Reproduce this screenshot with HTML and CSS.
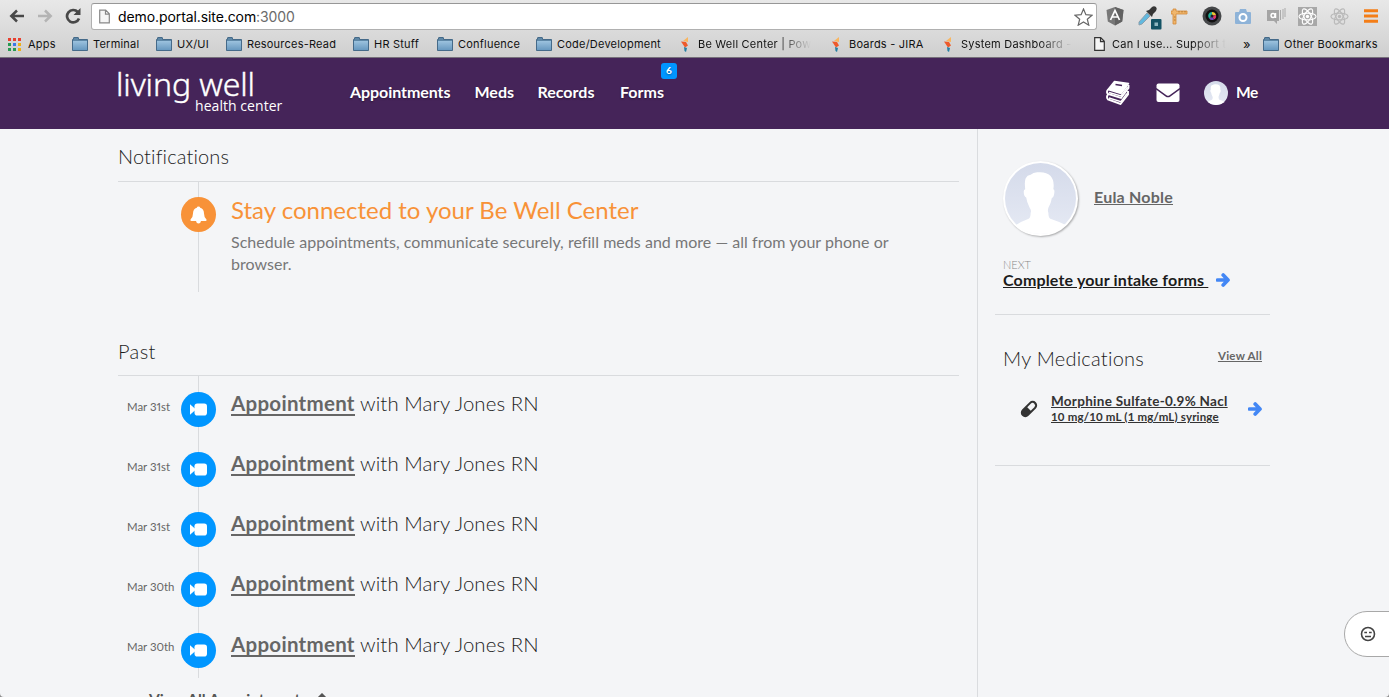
FILE: index.html
```html
<!DOCTYPE html>
<html lang="en">
<head>
<meta charset="utf-8">
<title>Living Well Health Center</title>
<link rel="stylesheet" href="styles.css">
</head>
<body>
<svg class="defs" width="0" height="0" aria-hidden="true">
  <defs>
    <linearGradient id="fold" x1="0" y1="0" x2="0" y2="1"><stop offset="0" stop-color="#9cc2de"/><stop offset="1" stop-color="#6899c0"/></linearGradient>
    <linearGradient id="avatar-bg" x1="0" y1="0" x2="0" y2="1"><stop offset="0" stop-color="#d4daea"/><stop offset="1" stop-color="#e6eaf4"/></linearGradient>
    <symbol id="folder" viewBox="0 0 16 14"><path d="M.5 13.5V2.5h1V1q0-.5.5-.5h4q.5 0 .5.5v1.500h9v11z" fill="#5e87a6" stroke="#456a89"/><path d="M1 4h14v9H1z" fill="url(#fold)"/></symbol>
    <symbol id="page" viewBox="0 0 11 14"><path d="M.7.7h6l3.600 3.600v9H.7zM6.500.7v4h4" fill="#f6f6f6" stroke="currentColor" stroke-width="1.200"/></symbol>
    <symbol id="spark" viewBox="0 0 8 15"><path d="M7 0v5L2 4z" fill="#f9b660"/><path d="M0 4.500 5 5l2 3.500-3 2z" fill="#ee5a2b"/><path d="m3 10 3 1-1 4-1.500-1z" fill="#2680a4"/></symbol>
    <symbol id="arrow" viewBox="0 0 14 14"><path d="M1.500 7h10M7.200 2 12 7l-4.800 5" fill="none" stroke="#4387f5" stroke-width="3.700" stroke-linecap="round" stroke-linejoin="round"/></symbol>
    <symbol id="person" viewBox="0 0 72 72"><circle cx="36" cy="36" r="36" fill="url(#avatar-bg)"/><path d="M11 63Q17 59 24 56.500q2-1 2-6 1-2-1-5-3-6-3.500-10.500-2.500-1-2.500-6 0-2 1.500-2.500-1-8 .5-11 1.500-3 5-3.500 3-3 8-2.500 8-.5 12 3.500 4.500 5 3 13.500 1.500 0 1 4-.5 4.500-2.500 5-1 6-3.500 10-1 3 0 5 0 5 2 6 9 3 16 6.500Q50 72 36 72T11 63z" fill="#fff"/></symbol>
    <symbol id="camera" viewBox="0 0 17 13"><rect x="4.500" y=".5" width="12.500" height="12" rx="2.800" fill="#fff"/><path d="M0 1.300 6 6.500 0 11.700z" fill="#fff"/></symbol>
    <symbol id="atom" viewBox="0 0 20 20"><g fill="none" stroke="currentColor" stroke-width="1.200"><ellipse cx="10" cy="10" rx="9" ry="3.600"/><ellipse cx="10" cy="10" rx="9" ry="3.600" transform="rotate(60 10 10)"/><ellipse cx="10" cy="10" rx="9" ry="3.600" transform="rotate(120 10 10)"/></g><circle cx="10" cy="10" r="1.800" fill="currentColor"/></symbol>
  </defs>
</svg>
<div class="window">
  <div class="browser">
    <div class="toolbar">
      <svg class="nav-back" width="16" height="14" viewBox="0 0 16 14"><path d="M15 7H3M8 1.500 2.300 7 8 12.500" fill="none" stroke="#484848" stroke-width="2.500"/></svg>
      <svg class="nav-forward" width="16" height="14" viewBox="0 0 16 14"><path d="M1 7h12M8 1.500 13.700 7 8 12.500" fill="none" stroke="#b4b4b4" stroke-width="2.500"/></svg>
      <svg class="nav-reload" width="16" height="16" viewBox="0 0 16 16"><path d="M12.800 4A6.200 6.200 0 1 0 14 10.500" fill="none" stroke="#484848" stroke-width="2.700"/><path d="M15.500 0v7H8.500z" fill="#484848"/></svg>
      <div class="address">
        <svg class="address-page" width="11" height="15"><use href="#page"/></svg>
        <span class="url">demo.portal.site.com<span class="port">:3000</span></span>
        <svg class="star" width="19" height="18" viewBox="0 0 19 18"><path d="m9.500 1 2.400 5.700 6.100.5-4.700 4 1.500 6-5.300-3.300-5.300 3.300 1.500-6-4.700-4 6.100-.5z" fill="#fff" stroke="#666" stroke-width="1.200"/></svg>
      </div>
      <div class="extensions">
        <svg width="18" height="20" viewBox="0 0 18 20"><path d="m9 1 8.500 3-1.300 11.500L9 19.500l-7.200-4L.5 4z" fill="#777"/><path d="M9 1v18.500l7.200-4L17.500 4z" fill="#626262"/><path d="M4.500 14 9 4.500l4.500 9.500M6.500 11h5" fill="none" stroke="#fff" stroke-width="1.700"/></svg>
        <svg class="dropper" width="24" height="25" viewBox="0 0 24 25"><path d="m1 17 8-9 3 3-8 8-3 1z" fill="#62b9df" stroke="#8b9fac"/><path d="m8 6 3-1 3-3q2-1.500 4 0 1.500 1.500 0 4l-3 3-1 3z" fill="#363636"/><rect x="13" y="14" width="10.500" height="10.500" rx="1" fill="#145365"/><rect x="16.500" y="17.500" width="3.500" height="3.500" fill="#8fb7c1"/></svg>
        <svg width="17" height="17" viewBox="0 0 17 17"><path d="M0 3h2V1h3v2h11v3H5v10H2V6H0z" fill="#efb66d" stroke="#d38939" stroke-width=".8"/><path d="M8 3v1.500m3-1.500v1.500M14 3v1.500M3 9h1.500M3 12h1.500" stroke="#a66a23" stroke-width=".8"/></svg>
        <svg width="20" height="20" viewBox="0 0 20 20"><circle cx="10" cy="10" r="9.500" fill="#454749"/><circle cx="10" cy="10" r="6.500" fill="#111"/><path d="M10 10V6a4 4 0 0 1 4 3z" fill="#e9c533"/><path d="m10 10 4-1a4 4 0 0 1-2 4.500z" fill="#e3376b"/><path d="m10 10 2 3.500a4 4 0 0 1-5-1z" fill="#6c4bbc"/><path d="m10 10-3 2.500A4 4 0 0 1 10 6z" fill="#20b29a"/><circle cx="10" cy="10" r="1.500" fill="#222"/></svg>
        <svg width="18" height="17" viewBox="0 0 18 17"><path d="M2 4h3l1-3h6l1 3h3q1 0 1 1v10q0 1-1 1H2q-1 0-1-1V5q0-1 1-1z" fill="#8eb3d8"/><circle cx="9" cy="9.500" r="3.500" fill="#8eb3d8" stroke="#fff" stroke-width="2"/></svg>
        <svg width="20" height="17" viewBox="0 0 20 17"><path d="M1 2h12v11h-2v3l-3-3H1z" fill="#a5a5a5"/><path d="M14.500 2v10M17 1v10M19 0v9" stroke="#aaa"/><circle cx="7" cy="7.500" r="2" fill="none" stroke="#fff" stroke-width="1.500"/><path d="M9.500 5v5" stroke="#fff" stroke-width="1.500"/></svg>
        <svg class="atom-box" width="19" height="19"><use href="#atom"/></svg>
        <svg class="atom-plain" width="19" height="19"><use href="#atom"/></svg>
        <svg width="14" height="14" viewBox="0 0 14 14"><path d="M0 1.700h14M0 7h14M0 12.300h14" stroke="#f47e17" stroke-width="3"/></svg>
      </div>
    </div>
    <div class="bookmarks">
      <span class="bookmark"><svg class="apps-icon" width="13" height="13" viewBox="0 0 13 13"><path d="M0 0h3v3H0zM5 0h3v3H5zM10 0h3v3h-3z" fill="#e8402f"/><path d="M0 5h3v3H0zM0 10h3v3H0zM5 10h3v3H5z" fill="#279a52"/><path d="M5 5h3v3H5z" fill="#3a78e8"/><path d="M10 5h3v3h-3zM10 10h3v3h-3z" fill="#eeaf16"/></svg><span class="t-apps">Apps</span></span>
      <span class="bookmark"><svg width="16" height="14"><use href="#folder"/></svg>Terminal</span>
      <span class="bookmark"><svg width="16" height="14"><use href="#folder"/></svg>UX/UI</span>
      <span class="bookmark"><svg width="16" height="14"><use href="#folder"/></svg>Resources-Read</span>
      <span class="bookmark"><svg width="16" height="14"><use href="#folder"/></svg>HR Stuff</span>
      <span class="bookmark"><svg width="16" height="14"><use href="#folder"/></svg>Confluence</span>
      <span class="bookmark"><svg width="16" height="14"><use href="#folder"/></svg>Code/Development</span>
      <span class="bookmark spark"><svg width="8" height="15"><use href="#spark"/></svg><span class="fade">Be Well Center | Pow</span></span>
      <span class="bookmark spark"><svg width="8" height="15"><use href="#spark"/></svg>Boards - JIRA</span>
      <span class="bookmark spark"><svg width="8" height="15"><use href="#spark"/></svg><span class="fade">System Dashboard -</span></span>
      <span class="bookmark doc"><svg width="11" height="14"><use href="#page"/></svg><span class="fade">Can I use... Support t</span></span>
      <span class="bookmark more">»</span>
      <span class="bookmark"><svg width="16" height="14"><use href="#folder"/></svg>Other Bookmarks</span>
    </div>
  </div>

  <header class="site-header">
    <div class="logo"><span class="logo-main">living well</span><span class="logo-sub">health center</span></div>
    <nav class="site-nav">
      <a class="n-app">Appointments</a><a class="n-meds">Meds</a><a class="n-rec">Records</a><a class="n-forms">Forms<span class="badge">6</span></a>
    </nav>
    <div class="user-tools">
      <svg class="books" width="24" height="25" viewBox="0 0 24 25"><path d="M8.500 1.500 22.500 3.500 15 13.500 2 9.500z" fill="#fff" stroke="#fff" stroke-width="1.500" stroke-linejoin="round"/><path d="m9.500 4.500 6.500 1" stroke="#452459" stroke-width="1.600"/><path d="M2 9.500Q0 12 2 14l13 4 7.500-10V5M2 14.500Q0 17 2 19.500L14.500 24l7.500-9.500V11" fill="none" stroke="#fff" stroke-width="1.900"/><path d="m3 12.500 12 3.500 6.500-9M3 18l12 3.700 6-8.200" fill="none" stroke="#fff" stroke-width="1.500"/></svg>
      <svg class="mail" width="24" height="20" viewBox="0 0 24 20"><rect x=".5" y=".5" width="23" height="18.500" rx="2" fill="#fff"/><path d="m0 5.500 10 7.300q2 1.400 4 0l10-7.300" fill="none" stroke="#452459" stroke-width="1.500"/></svg>
      <svg class="me-avatar" width="24" height="24"><use href="#person"/></svg>
      <span class="me">Me</span>
    </div>
  </header>

  <div class="content">
    <main class="feed">
      <h2 class="section-title first">Notifications</h2>
      <section class="timeline notice">
        <span class="dot dot-orange"><svg width="17" height="18" viewBox="0 0 17 18"><path d="M8.500.5q1.500 0 1.700 1.300Q14 3 14 7.500q0 4 2.500 6 .4 1.500-1 1.500h-14Q.1 15 .5 13.500 3 11.500 3 7.500 3 3 6.800 1.800 7 .5 8.500.5zM6 15h5Q10.500 17.500 8.500 17.500T6 15z" fill="#fff"/></svg></span>
        <div class="notice-copy">
          <h3 class="notice-title">Stay connected to your Be Well Center</h3>
          <p class="notice-text">Schedule appointments, communicate securely, refill meds and more — all from your phone or<br>browser.</p>
        </div>
      </section>
      <h2 class="section-title past">Past</h2>
      <section class="timeline visits">
        <div class="visit"><time>Mar 31st</time><span class="dot"><svg width="17" height="13"><use href="#camera"/></svg></span><p><a>Appointment</a><span class="with">with Mary Jones RN</span></p></div>
        <div class="visit"><time>Mar 31st</time><span class="dot"><svg width="17" height="13"><use href="#camera"/></svg></span><p><a>Appointment</a><span class="with">with Mary Jones RN</span></p></div>
        <div class="visit"><time>Mar 31st</time><span class="dot"><svg width="17" height="13"><use href="#camera"/></svg></span><p><a>Appointment</a><span class="with">with Mary Jones RN</span></p></div>
        <div class="visit"><time>Mar 30th</time><span class="dot"><svg width="17" height="13"><use href="#camera"/></svg></span><p><a>Appointment</a><span class="with">with Mary Jones RN</span></p></div>
        <div class="visit"><time>Mar 30th</time><span class="dot"><svg width="17" height="13"><use href="#camera"/></svg></span><p><a>Appointment</a><span class="with">with Mary Jones RN</span></p></div>
      </section>
      <div class="view-past">View All Appointments <svg width="12" height="12" viewBox="0 0 12 12"><path d="m1.500 6 4.500-4.500L10.500 6M6 2v10" fill="none" stroke="#555" stroke-width="2.200"/></svg></div>
    </main>
    <aside class="sidebar">
      <section class="profile">
        <div class="profile-row"><span class="avatar"><svg width="71" height="71" viewBox="0 0 72 72"><use href="#person" width="72" height="72"/></svg></span><a class="name">Eula Noble</a></div>
        <div class="next">NEXT</div>
        <div class="intake"><a>Complete your intake forms&nbsp;</a><svg width="14" height="14"><use href="#arrow"/></svg></div>
      </section>
      <section class="meds">
        <div class="meds-head"><h2>My Medications</h2><a>View All</a></div>
        <div class="med">
          <svg class="pill" width="18" height="18" viewBox="0 0 18 18"><g transform="rotate(-45 9 9)"><rect x="-.7" y="4.500" width="19.400" height="9" rx="4.500" fill="#333"/><path d="M9 6.500h5a2.500 2.500 0 0 1 0 5H9z" fill="#f4f5f7"/></g></svg>
          <div class="med-copy"><a class="med-name">Morphine Sulfate-0.9% Nacl</a><a class="med-dose">10 mg/10 mL (1 mg/mL) syringe</a></div>
          <svg width="14" height="14"><use href="#arrow"/></svg>
        </div>
      </section>
    </aside>
  </div>
  <div class="feedback"><svg width="16" height="16" viewBox="0 0 16 16"><circle cx="8" cy="8" r="6.500" fill="none" stroke="#444" stroke-width="1.600"/><path d="M4.300 6.500h2.700M9 6.500h2.700M5 10.500h6" stroke="#444" stroke-width="1.600"/></svg></div>
</div>
</body>
</html>
```
FILE: styles.css
```css
* { box-sizing: border-box; }
body { margin: 0; background: #8d8d8d; overflow: hidden; font-family: Lato, "Open Sans", sans-serif; color: #1c1c1c; }
h2, h3, p { margin: 0; font-weight: 300; }
svg { display: block; flex: none; }
.defs { position: absolute; }
.window { position: relative; width: 1389px; height: 697px; overflow: hidden; background: #f4f5f7; border-radius: 0 0 4px 4px; }

/* browser bars */
.browser { height: 58px; background: linear-gradient(#e8e8e8, #cfcfcf); border-bottom: 1px solid #76707a; font-family: Inter, sans-serif; color: #111; }
.toolbar { height: 32px; display: flex; align-items: center; padding-left: 9px; }
.nav-forward { margin-left: 12px; }
.nav-reload { margin-left: 12px; }
.address { width: 1006px; height: 27px; margin: 1px 0 0 10px; padding: 0 3px 0 7px; display: flex; align-items: center; background: #fff; border: 1px solid #b0b0b0; border-top-color: #979797; border-radius: 3px; }
.address-page { color: #888; }
.url { margin-left: 8px; font-size: 14px; letter-spacing: -.09px; color: #000; flex: 1; }
.port { color: #6b6b6b; }
.extensions { display: grid; grid-template-columns: 32px 33px 31px 32px 32px 32px 32px 34px 14px; align-items: center; padding-left: 9px; }
.dropper { margin-top: 3px; }
.atom-box { background: #a8a8a8; color: #fff; }
.atom-plain { color: #b9b9b9; }
.bookmarks { display: grid; grid-template-columns: 64px 84px 70px 127px 84px 99px 142px 151px 112px 152px 149px 21px 126px; padding-left: 8px; height: 24px; align-items: center; }
.bookmark { display: flex; align-items: center; gap: 5px; font-size: 11px; letter-spacing: .22px; white-space: nowrap; }
.t-apps { margin-left: 2px; }
.spark { padding-left: 3px; gap: 9px; }
.doc { padding-left: 1px; gap: 7px; color: #333; }
.fade { background: linear-gradient(90deg, #111 70%, rgba(17,17,17,0)); -webkit-background-clip: text; background-clip: text; color: transparent; }
.more { font-size: 13px; padding-left: 1px; }

/* site header */
.site-header { height: 71px; background: #452459; color: #fff; display: flex; padding-left: 117px; }
.logo { width: 233px; padding-top: 6px; display: flex; flex-direction: column; font-family: "Noto Sans", "Open Sans", sans-serif; }
.logo-main { margin-left: -1px; font-size: 32px; line-height: 40px; font-weight: 300; letter-spacing: -.1px; height: 34px; -webkit-text-stroke: .4px #fff; }
.logo-sub { margin-left: 78px; font-family: "Open Sans", sans-serif; font-size: 14px; line-height: 16px; letter-spacing: .05px; }
.site-nav { display: flex; width: 756px; padding-top: 24px; font-size: 16px; font-weight: 700; line-height: 20px; text-shadow: 0 1px 2px rgba(0,0,0,.4); }
.n-app { width: 124.500px; letter-spacing: -.07px; }
.n-meds { width: 63px; }
.n-rec { width: 82.500px; }
.n-forms { position: relative; }
.badge { position: absolute; left: 41px; top: -19px; width: 16px; height: 16px; background: #0096ff; border-radius: 3px; font-size: 10px; line-height: 15px; text-align: center; }
.user-tools { display: flex; align-items: center; height: 69px; }
.mail { margin-left: 26px; }
.me-avatar { margin-left: 24px; }
.me { margin: -2px 0 0 8px; font-size: 15.500px; font-weight: 700; letter-spacing: -.3px; text-shadow: 0 1px 2px rgba(0,0,0,.4); }

/* activity feed */
.content { display: flex; height: 568px; }
.feed { width: 978px; flex: none; padding: 0 18px 0 118px; border-right: 1px solid #dadcdf; }
.section-title { border-bottom: 1px solid #d9dbde; font-size: 20px; line-height: 24px; letter-spacing: .14px; }
.first { height: 53px; padding-top: 15px; }
.past { height: 84px; padding-top: 47px; letter-spacing: .4px; }
.timeline { background: linear-gradient(#d9dbde, #d9dbde) 80px 0 / 1px 100% no-repeat; }
.notice { height: 110px; padding: 15px 0 0 63px; display: flex; }
.dot { width: 35px; height: 35px; border-radius: 50%; background: #0096ff; display: flex; align-items: center; justify-content: center; flex: none; }
.dot-orange { background: #f89238; }
.notice-copy { margin: -1px 0 0 15px; white-space: nowrap; }
.notice-title { font-size: 24px; line-height: 28px; font-weight: 400; color: #f89238; }
.notice-text { margin-top: 7px; font-size: 16px; line-height: 22px; font-weight: 400; letter-spacing: .035px; color: #777; }
.visits { height: 302px; padding-top: 16px; }
.visit { height: 60.150px; display: grid; grid-template-columns: 63px 35px 1fr; align-items: start; }
.visit time { padding: 6.500px 0 0 9px; font-size: 11.400px; line-height: 16px; color: #666; white-space: nowrap; font-variant-numeric: proportional-nums; }
.visit p { margin: -1px 0 0 15px; display: flex; gap: 5px; font-size: 20.400px; line-height: 24px; letter-spacing: .1px; }
.visit a { width: 124px; font-size: 20.500px; font-weight: 700; letter-spacing: .28px; color: #666; border-bottom: 2px solid #666; line-height: 22px; height: 24px; margin-top: 1px; }
.view-past { padding: 11px 0 0 31px; font-size: 15.500px; font-weight: 700; line-height: 20px; color: #555; display: flex; gap: 9px; align-items: center; white-space: nowrap; }

/* patient sidebar */
.sidebar { width: 292px; padding-left: 17px; }
.profile { height: 186px; padding: 31px 0 0 8px; border-bottom: 1px solid #d9dbde; }
.profile-row { display: flex; align-items: center; gap: 16px; height: 76px; }
.avatar { width: 75px; height: 75px; padding: 2px; background: #fff; border-radius: 50%; box-shadow: 1px 1px 2px rgba(0,0,0,.3); }
.name { margin-top: -3px; font-size: 16px; font-weight: 700; letter-spacing: .22px; color: #666; text-decoration: underline; }
.next { margin-top: 22px; font-size: 11px; line-height: 14px; font-weight: 300; color: #888; }
.intake { margin-top: -1px; display: flex; align-items: center; gap: 8px; font-size: 16px; line-height: 17px; font-weight: 700; letter-spacing: .16px; white-space: nowrap; }
.intake a, .med a, .meds-head a { text-decoration: underline; }
.meds { height: 151px; border-bottom: 1px solid #d9dbde; padding: 30px 8px 0; }
.meds-head { display: flex; justify-content: space-between; }
.meds-head h2 { font-size: 20px; line-height: 26px; letter-spacing: .25px; }
.meds-head a { margin-top: 1px; font-size: 11.500px; line-height: 20px; font-weight: 700; letter-spacing: .25px; color: #666; }
.med { display: flex; align-items: center; margin-top: 22px; height: 32px; padding-left: 17px; white-space: nowrap; }
.med-copy { width: 197px; margin: -1px 0 0 13px; display: flex; flex-direction: column; color: #333; font-weight: 700; }
.med-name { font-size: 13.500px; line-height: 16px; letter-spacing: .28px; }
.med-dose { font-size: 11.500px; line-height: 15px; letter-spacing: .17px; }

.feedback { position: absolute; right: -3px; top: 611px; width: 48px; height: 46px; border: 1px solid #a8a8a8; border-radius: 23px 0 0 23px; background: #fff; display: flex; align-items: center; padding-left: 15px; }
```
